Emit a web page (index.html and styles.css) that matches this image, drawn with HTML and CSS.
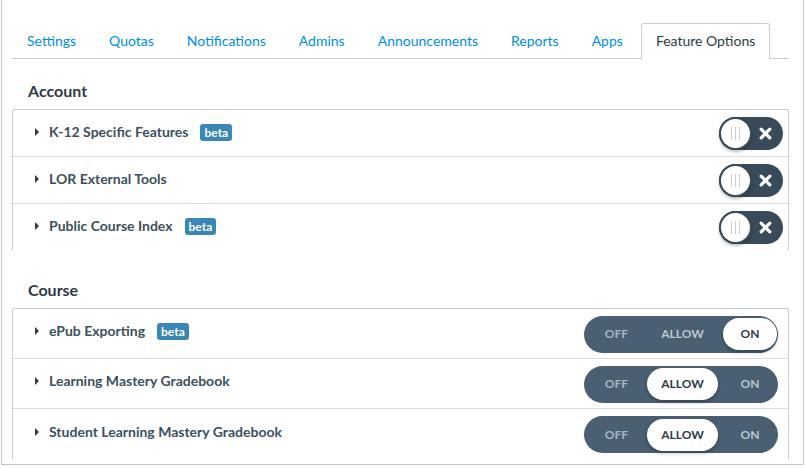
FILE: index.html
```html
<!DOCTYPE html>
<html>
<head>
<meta charset="utf-8">
<link rel="stylesheet" href="styles.css">
</head>
<body>
<div class="window">
  <div class="content">
    <ul class="tabs">
      <li class="tab">Settings</li>
      <li class="tab">Quotas</li>
      <li class="tab">Notifications</li>
      <li class="tab">Admins</li>
      <li class="tab">Announcements</li>
      <li class="tab">Reports</li>
      <li class="tab">Apps</li>
      <li class="tab active">Feature Options</li>
    </ul>

    <h2 class="section-title first">Account</h2>
    <div class="feature-box">
      <div class="row account-row">
        <span class="caret"></span><span class="name">K-12 Specific Features</span><span class="beta">beta</span>
        <span class="switch"><span class="knob"><i></i><i></i><i></i></span><svg class="x" viewBox="0 0 12 12"><path d="M2 2L10 10M10 2L2 10"/></svg></span>
      </div>
      <div class="row account-row">
        <span class="caret"></span><span class="name">LOR External Tools</span>
        <span class="switch"><span class="knob"><i></i><i></i><i></i></span><svg class="x" viewBox="0 0 12 12"><path d="M2 2L10 10M10 2L2 10"/></svg></span>
      </div>
      <div class="row account-row last">
        <span class="caret"></span><span class="name">Public Course Index</span><span class="beta">beta</span>
        <span class="switch"><span class="knob"><i></i><i></i><i></i></span><svg class="x" viewBox="0 0 12 12"><path d="M2 2L10 10M10 2L2 10"/></svg></span>
      </div>
    </div>

    <h2 class="section-title second">Course</h2>
    <div class="feature-box">
      <div class="row course-row">
        <span class="caret"></span><span class="name">ePub Exporting</span><span class="beta">beta</span>
        <span class="tri"><span class="seg off">OFF</span><span class="seg allow">ALLOW</span><span class="seg on selected">ON</span></span>
      </div>
      <div class="row course-row">
        <span class="caret"></span><span class="name">Learning Mastery Gradebook</span>
        <span class="tri"><span class="seg off">OFF</span><span class="seg allow selected">ALLOW</span><span class="seg on">ON</span></span>
      </div>
      <div class="row course-row last">
        <span class="caret"></span><span class="name">Student Learning Mastery Gradebook</span>
        <span class="tri"><span class="seg off">OFF</span><span class="seg allow selected">ALLOW</span><span class="seg on">ON</span></span>
      </div>
    </div>
  </div>
</div>
</body>
</html>
```

FILE: styles.css
```css
* { box-sizing: border-box; }
html, body { margin: 0; padding: 0; background: #fff; }
body { font-family: Lato, "Open Sans", "Liberation Sans", sans-serif; color: #2d3b45; }

.window {
  margin-left: 1px;
  width: 803px;
  height: 465px;
  border-left: 1px solid #c9c9c9;
  border-right: 1px solid #c9c9c9;
  border-bottom: 1px solid #c4c4c4;
  padding-left: 10px;
  overflow: hidden;
}
.content { width: 777px; }

.tabs {
  list-style: none;
  margin: 23px 0 0 0;
  padding: 0;
  display: flex;
  height: 36px;
  border-bottom: 1px solid #c7cdd1;
}
.tab {
  font-size: 14px;
  line-height: 33px;
  height: 36px;
  padding: 0 14px;
  margin-right: 3px;
  border: 1px solid transparent;
  color: #008ee2;
  white-space: nowrap;
}
.tab.active {
  color: #2d3b45;
  background: #fff;
  border-color: #c7cdd1;
  border-bottom: none;
  border-radius: 3px 3px 0 0;
  height: 36px;
}

.section-title {
  margin: 0;
  font-size: 16px;
  font-weight: 700;
  line-height: 20px;
  padding-left: 16px;
  color: #2d3b45;
}
.section-title.first { margin-top: 22px; margin-bottom: 8px; }
.section-title.second { margin-top: 30px; margin-bottom: 8px; }

.feature-box {
  border: 1px solid #c7cdd1;
  border-bottom: none;
  border-radius: 3px 3px 0 0;
}
.row {
  display: flex;
  align-items: center;
  border-bottom: 1px solid #d7dce0;
  padding-left: 22px;
}
.row.last { border-bottom: none; }
.account-row { height: 47px; padding-right: 5px; }
.account-row.last { height: 46px; }
.course-row { height: 50px; padding-right: 10px; }
.course-row .name, .course-row .caret { margin-top: -5px; }
.course-row .beta { margin-top: -4px; }

.caret {
  width: 0; height: 0;
  border-top: 4px solid transparent;
  border-bottom: 4px solid transparent;
  border-left: 4px solid #2d3b45;
  margin-right: 10px;
  margin-top: -2px;
}
.name {
  font-size: 14px;
  font-weight: 700;
  color: #3c4f5e;
  line-height: 18px;
  margin-top: -2px;
}
.beta {
  margin-left: 12px;
  background: #3a87b5;
  color: #fff;
  font-size: 12px;
  font-weight: 700;
  line-height: 17px;
  height: 17px;
  padding: 0 4px;
  border-radius: 3px;
  margin-top: -1px;
}

.switch {
  margin-left: auto;
  width: 64px;
  height: 33px;
  border-radius: 17px;
  background: #394b58;
  display: flex;
  align-items: center;
}
.knob {
  width: 33px;
  height: 33px;
  border-radius: 50%;
  background: #fff;
  border: 2px solid #394b58;
  box-shadow: 0 2px 3px rgba(0,0,0,0.25);
  display: flex;
  align-items: center;
  justify-content: center;
  gap: 3px;
}
.knob i {
  display: block;
  width: 1px;
  height: 13px;
  background: #c7cdd1;
}
.x {
  width: 13px;
  height: 13px;
  margin-left: 7px;
}
.x path { stroke: #fff; stroke-width: 3; stroke-linecap: round; fill: none; }

.tri {
  margin-left: auto;
  display: flex;
  align-items: center;
  width: 194px;
  height: 37px;
  padding: 2px 1px 2px 2px;
  border-radius: 19px;
  background: #4a6072;
  margin-top: 1px;
}
.seg {
  height: 32px;
  line-height: 32px;
  text-align: center;
  font-size: 12px;
  font-weight: 700;
  color: #bcc6ce;
  border-radius: 16px;
}
.seg.off { width: 61px; color: #a9b6c0; }
.seg.allow { width: 71px; }
.seg.on { width: 54px; margin-left: 5px; }
.seg.selected {
  background: #fff;
  color: #2d3b45;
  box-shadow: 0 2px 4px rgba(0,0,0,0.3);
}
```
